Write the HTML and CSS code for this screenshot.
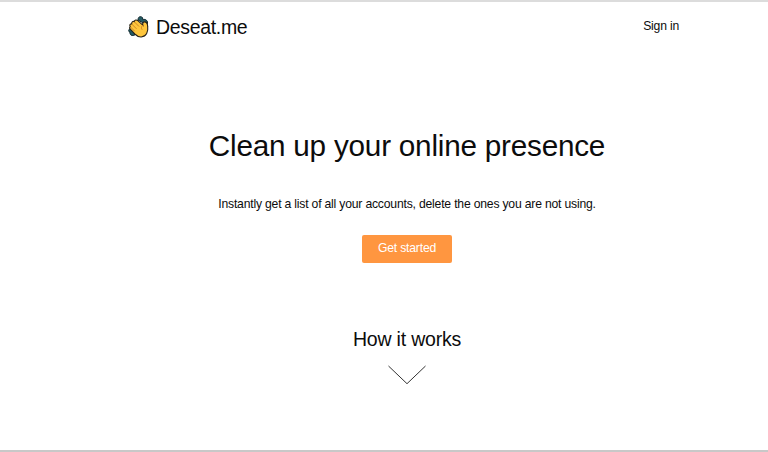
FILE: index.html
```html
<!DOCTYPE html>
<html lang="en">
<head>
<meta charset="utf-8">
<title>Deseat.me</title>
<link rel="stylesheet" href="styles.css">
</head>
<body>
<header class="header">
  <a class="brand">
    <svg class="logo" viewBox="0 0 22 24">
      <g fill="#245b65" stroke="#10272d" stroke-width="1">
        <path d="M10 5C10 1.5 12.5.8 14.5 2.6L14.7 4.5C17.5 3.8 20.6 5.8 19.2 9.3L17 9Z"/>
        <path d="M2 13.5C.2 14.5.3 16.8 2 17.4C1.6 20 4 21.3 6.8 20L7 18Z"/>
      </g>
      <path d="M2.2 11.5C1.2 10.1 2.2 8.6 3.7 8.9C3.3 7.2 4.8 5.9 6.2 6.6C6.5 4.8 8.5 4.4 9.8 5.7L14.8 10.1C14.3 8.2 15.2 6.5 17 6.9C18.5 7.2 19.6 9.2 19.7 11.7C20.4 16.7 18.4 21.6 13.3 22C10.5 22.2 8.7 20.9 6.8 19L2.7 14.7C1.5 13.4 1.2 12.3 2.2 11.5Z" fill="#fec63d" stroke="#28231a" stroke-width="1.1"/>
      <path d="M3.9 9.2L8.5 13.8M6.4 6.9L11 11.5M2.5 12L6.7 16.2M14.8 10.1C13 12 13.2 13.5 14.2 14.8" fill="none" stroke="#c98020" stroke-width=".9"/>
    </svg>
    <span class="name">Deseat.me</span>
  </a>
  <a class="signin">Sign in</a>
</header>
<main class="hero">
  <h1 class="title">Clean up your online presence</h1>
  <p class="lead">Instantly get a list of all your accounts, delete the ones you are not using.</p>
  <button class="cta">Get started</button>
  <h2 class="how">How it works</h2>
  <svg class="chevron" viewBox="0 0 38 20"><path d="M.5 1L19 18.7L37.5 1"/></svg>
</main>
</body>
</html>
```
FILE: styles.css
```css
* { box-sizing: border-box; }
body {
  margin: 0;
  height: 452px;
  overflow: hidden;
  background: #fff;
  border-top: 2px solid #dcdcdc;
  border-bottom: 2px solid #c8c8c8;
  color: #0c0c0c;
  font-family: "Liberation Sans", Arial, sans-serif;
  font-size: 12.2px;
  letter-spacing: -0.2px;
}
.header {
  display: flex;
  justify-content: space-between;
  align-items: center;
  height: 50px;
  padding: 0 89px 0 128px;
}
.brand { display: flex; align-items: center; }
.logo { width: 22px; height: 24px; margin-right: 6px; }
.name { font-size: 19.5px; line-height: 24px; letter-spacing: -0.33px; }
.signin { line-height: 16px; margin-bottom: 2px; }
.hero {
  display: flex;
  flex-direction: column;
  align-items: center;
  padding-left: 46px;
}
.title {
  margin: 76px 0 0;
  font-size: 29.7px;
  font-weight: 400;
  line-height: 36px;
  letter-spacing: -0.22px;
}
.lead { margin: 32px 0 0; line-height: 16px; }
.cta {
  width: 90px;
  height: 28px;
  margin-top: 23px;
  padding: 0 0 2px;
  border: 0;
  border-radius: 2px;
  background: #ff9640;
  color: #fff;
  font: inherit;
  letter-spacing: inherit;
  line-height: 26px;
}
.how {
  margin: 64px 0 0;
  font-size: 19.5px;
  font-weight: 400;
  line-height: 24px;
  letter-spacing: -0.2px;
}
.chevron { width: 38px; height: 20px; margin-top: 14px; }
.chevron path { fill: none; stroke: #333; stroke-width: 1; }
```
